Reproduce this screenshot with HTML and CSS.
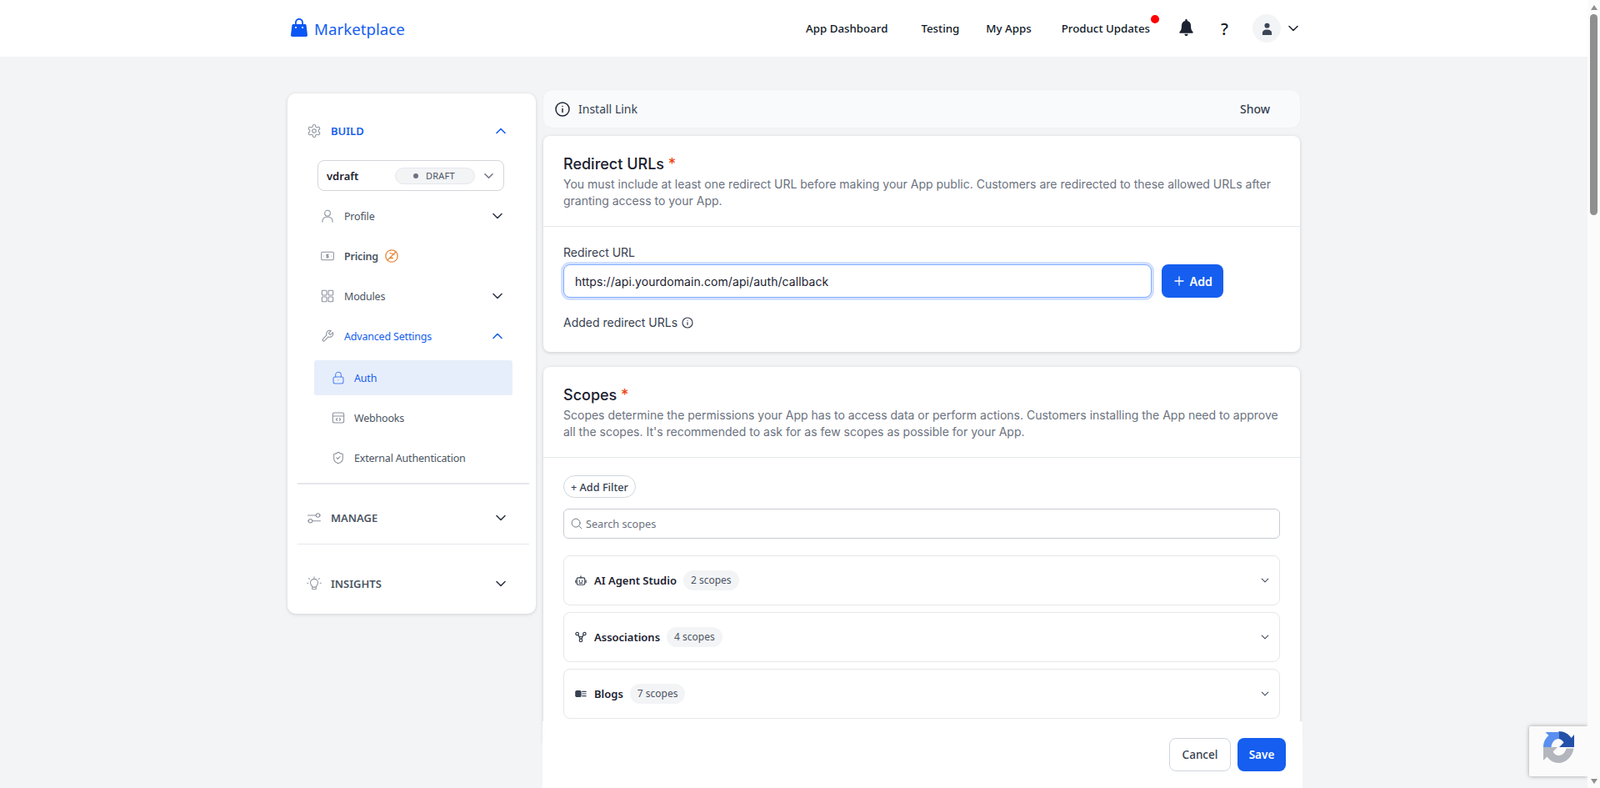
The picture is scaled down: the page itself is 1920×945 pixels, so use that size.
FILE: index.html
```html
<!DOCTYPE html>
<html lang="en">
<head>
  <meta charset="UTF-8" />
  <title>Marketplace</title>
  <link rel="stylesheet" href="styles.css">
</head>
<body>

<div class="page">
  <header class="topbar">
    <div class="topbar-inner">
      <a class="logo">
        <svg class="logo-bag" viewBox="0 0 20 22"><path fill="#0b57f5" d="M10 0C7 0 5 2.300 5 5.200V7H2.900C2.100 7 1.500 7.600 1.400 8.400L0 20C-.1 21.100.7 22 1.800 22h16.400c1.100 0 1.900-.9 1.800-2L18.600 8.400C18.500 7.600 17.900 7 17.100 7H15V5.200C15 2.300 13 0 10 0zM6.800 7V5.200C6.800 3.300 8 1.800 10 1.800s3.200 1.500 3.200 3.400V7z"/><circle cx="6" cy="11" r="1.100" fill="#fff"/><circle cx="14" cy="11" r="1.100" fill="#fff"/></svg>
        Marketplace
      </a>
      <nav class="topnav">
        <a class="topnav-link topnav-first">App Dashboard</a>
        <a class="topnav-link">Testing</a>
        <a class="topnav-link topnav-third">My Apps</a>
        <a class="topnav-link updates">Product Updates<span class="red-dot"></span></a>
        <svg class="bell" viewBox="0 0 18 22"><path fill="#1b2130" d="M9 0c-.8 0-1.400.6-1.400 1.400v.7C4.600 2.800 2.900 5.300 2.900 8.500c0 4-.8 6.300-2.300 7.800-.6.600-.7 1-.5 1.500.2.400.6.600 1.200.6h15.400c.6 0 1-.2 1.200-.6.200-.5.100-.9-.5-1.500-1.500-1.500-2.300-3.800-2.300-7.800 0-3.200-1.700-5.700-4.700-6.400v-.7C10.400.6 9.800 0 9 0zM6.600 19.400C6.800 20.900 7.800 22 9 22s2.200-1.100 2.400-2.600z"/></svg>
        <span class="help">?</span>
        <span class="avatar">
          <svg viewBox="0 0 14 16"><circle cx="7" cy="4" r="3.300" fill="#3c4658"/><path fill="#3c4658" d="M1 16v-2.500C1 10.500 3.500 9 7 9s6 1.500 6 4.500V16z"/></svg>
        </span>
        <svg class="avatar-chevron" viewBox="0 0 12 8"><path d="M1 1.500l5 5 5-5" fill="none" stroke="#1b2130" stroke-width="1.500" stroke-linecap="round" stroke-linejoin="round"/></svg>
      </nav>
    </div>
  </header>

  <div class="layout">
    <aside class="sidebar">
      <div class="side-head active first">
        <svg class="ic-16 grey" viewBox="0 0 24 24"><path d="M12.220 2h-.44a2 2 0 0 0-2 2v.18a2 2 0 0 1-1 1.730l-.43.25a2 2 0 0 1-2 0l-.15-.08a2 2 0 0 0-2.730.73l-.22.38a2 2 0 0 0 .73 2.730l.15.1a2 2 0 0 1 1 1.720v.51a2 2 0 0 1-1 1.740l-.15.09a2 2 0 0 0-.73 2.730l.22.38a2 2 0 0 0 2.730.73l.15-.08a2 2 0 0 1 2 0l.43.25a2 2 0 0 1 1 1.730V20a2 2 0 0 0 2 2h.44a2 2 0 0 0 2-2v-.18a2 2 0 0 1 1-1.730l.43-.25a2 2 0 0 1 2 0l.15.08a2 2 0 0 0 2.730-.73l.22-.39a2 2 0 0 0-.73-2.730l-.15-.08a2 2 0 0 1-1-1.740v-.5a2 2 0 0 1 1-1.740l.15-.09a2 2 0 0 0 .73-2.730l-.22-.38a2 2 0 0 0-2.730-.73l-.15.08a2 2 0 0 1-2 0l-.43-.25a2 2 0 0 1-1-1.730V4a2 2 0 0 0-2-2z"/><circle cx="12" cy="12" r="3"/></svg>
        <span>BUILD</span>
        <svg class="chev" viewBox="0 0 12 8"><path d="M1 6.500l5-5 5 5"/></svg>
      </div>

      <div class="version-select">
        <span class="version-name">vdraft</span>
        <span class="draft-pill"><i></i>DRAFT</span>
        <svg class="chev chev-light" viewBox="0 0 12 8"><path d="M1 1.500l5 5 5-5"/></svg>
      </div>

      <div class="side-row">
        <svg class="ic-14 grey" viewBox="0 0 24 24"><circle cx="12" cy="7" r="5"/><path d="M3 23v-2a7 7 0 0 1 7-7h4a7 7 0 0 1 7 7v2"/></svg>
        <span>Profile</span>
        <svg class="chev" viewBox="0 0 12 8"><path d="M1 1.500l5 5 5-5"/></svg>
      </div>
      <div class="side-row strong">
        <svg class="ic-14 grey" viewBox="0 0 24 24"><rect x="1" y="5" width="22" height="14" rx="2"/><path d="M12 8.500v7M14 10.200c-.5-.6-1.200-.8-2-.8-1 0-2 .5-2 1.400 0 2 4 .9 4 2.800 0 .9-1 1.400-2 1.400-.8 0-1.500-.3-2-.9M5 12h.01M19 12h.01"/></svg>
        <span>Pricing</span>
        <svg class="pricing-badge" viewBox="0 0 16 16"><circle cx="8" cy="8" r="7.200"/><path d="M3 13L13 3M6 4.500l5 1.500M8.500 7.500l-2 3h3"/></svg>
      </div>
      <div class="side-row">
        <svg class="ic-14 grey" viewBox="0 0 24 24"><rect x="2" y="2" width="8.500" height="8.500" rx="1.500"/><rect x="13.500" y="2" width="8.500" height="8.500" rx="1.500"/><rect x="2" y="13.500" width="8.500" height="8.500" rx="1.500"/><rect x="13.500" y="13.500" width="8.500" height="8.500" rx="1.500"/></svg>
        <span>Modules</span>
        <svg class="chev" viewBox="0 0 12 8"><path d="M1 1.500l5 5 5-5"/></svg>
      </div>
      <div class="side-row active">
        <svg class="ic-14 grey" viewBox="0 0 24 24"><path d="M14.700 6.300a1 1 0 0 0 0 1.400l1.600 1.600a1 1 0 0 0 1.400 0l3.770-3.770a6 6 0 0 1-7.940 7.940l-6.910 6.910a2.120 2.120 0 0 1-3-3l6.910-6.910a6 6 0 0 1 7.940-7.940l-3.760 3.760z"/></svg>
        <span>Advanced Settings</span>
        <svg class="chev" viewBox="0 0 12 8"><path d="M1 6.500l5-5 5 5"/></svg>
      </div>

      <div class="side-sub selected">
        <svg class="ic-14 blue" viewBox="0 0 24 24"><rect x="3" y="10.500" width="18" height="12" rx="3"/><path d="M7 10.500V7a5 5 0 0 1 10 0v3.500M12 16h.01"/></svg>
        <span>Auth</span>
      </div>
      <div class="side-sub">
        <svg class="ic-14 grey" viewBox="0 0 24 24"><rect x="2" y="3" width="20" height="18" rx="3"/><path d="M2 9h20M10 13l-2 2 2 2M14 13l2 2-2 2"/></svg>
        <span>Webhooks</span>
      </div>
      <div class="side-sub">
        <svg class="ic-14 grey" viewBox="0 0 24 24"><path d="M20 13c0 5-3.500 7.500-7.660 8.950a1 1 0 0 1-.67-.01C7.500 20.500 4 18 4 13V6a1 1 0 0 1 1-1c2 0 4.500-1.200 6.240-2.720a1.170 1.170 0 0 1 1.520 0C14.510 3.810 17 5 19 5a1 1 0 0 1 1 1z"/><path d="M9 12l2 2 4-4"/></svg>
        <span>External Authentication</span>
      </div>

      <div class="side-divider thick"></div>

      <div class="side-head manage">
        <svg class="ic-16 grey" viewBox="0 0 24 24"><path d="M2 8h13M21 8h1M2 17h1M9 17h13"/><circle cx="18" cy="8" r="3"/><circle cx="6" cy="17" r="3"/></svg>
        <span>MANAGE</span>
        <svg class="chev" viewBox="0 0 12 8"><path d="M1 1.500l5 5 5-5"/></svg>
      </div>

      <div class="side-divider"></div>

      <div class="side-head insights">
        <svg class="ic-16 grey" viewBox="0 0 24 24"><path d="M9 17c0-1.500-3-3-3-6.500a6 6 0 0 1 12 0C18 14 15 15.500 15 17v2.500a1.500 1.500 0 0 1-1.500 1.500h-3A1.500 1.500 0 0 1 9 19.500zM9.500 17.500h5M12 1v1.500M3.500 3.500l1 1M20.500 3.500l-1 1M1 11h1.500M21.500 11H23"/></svg>
        <span>INSIGHTS</span>
        <svg class="chev" viewBox="0 0 12 8"><path d="M1 1.500l5 5 5-5"/></svg>
      </div>
    </aside>

    <main class="content">
      <div class="install-bar">
        <svg class="install-icon" viewBox="0 0 18 18"><circle cx="9" cy="9" r="8"/><path d="M9 8.500v4M9 5.500h.01"/></svg>
        <span class="install-label">Install Link</span>
        <span class="install-show">Show</span>
      </div>

      <section class="card redirect-card">
        <div class="card-head">
          <h2>Redirect URLs <span class="req">*</span></h2>
          <p>You must include at least one redirect URL before making your App public. Customers are redirected to these allowed URLs after granting access to your App.</p>
        </div>
        <div class="card-body">
          <label class="field-label" for="redirectUrl">Redirect URL</label>
          <div class="redirect-row">
            <input class="redirect-input" id="redirectUrl" type="text" value="https://api.yourdomain.com/api/auth/callback" />
            <button class="btn-primary add-btn">
              <svg viewBox="0 0 12 12"><path d="M6 1v10M1 6h10"/></svg>
              Add
            </button>
          </div>
          <div class="added-label">
            Added redirect URLs
            <svg viewBox="0 0 14 14"><circle cx="7" cy="7" r="6"/><path d="M7 6.500v3M7 4.300h.01"/></svg>
          </div>
        </div>
      </section>

      <section class="card scopes-card">
        <div class="card-head">
          <h2>Scopes <span class="req">*</span></h2>
          <p>Scopes determine the permissions your App has to access data or perform actions. Customers installing the App need to approve all the scopes. It's recommended to ask for as few scopes as possible for your App.</p>
        </div>
        <div class="card-body scopes-body">
          <button class="filter-btn">+ Add Filter</button>
          <div class="scope-search">
            <svg viewBox="0 0 16 16"><circle cx="7" cy="7" r="5.700"/><path d="M11.300 11.300L14.500 14.500"/></svg>
            <span>Search scopes</span>
          </div>

          <div class="scope-row">
            <svg class="scope-icon" viewBox="0 0 16 16"><rect x="2.500" y="4.500" width="11" height="9.500" rx="2"/><path d="M8 4.500V2M1 8v3M15 8v3M6 8v1.500M10 8v1.500M6 11.500h4"/></svg>
            <span class="scope-name">AI Agent Studio</span>
            <span class="scope-count">2 scopes</span>
            <svg class="chev" viewBox="0 0 12 8"><path d="M1 1.500l5 5 5-5"/></svg>
          </div>
          <div class="scope-row">
            <svg class="scope-icon" viewBox="0 0 16 16"><circle cx="3" cy="3.500" r="2"/><circle cx="13" cy="3.500" r="2"/><circle cx="8" cy="12.500" r="2"/><path d="M4.500 5L7 10.500M11.500 5L9 10.500M5.500 7.500h5"/></svg>
            <span class="scope-name">Associations</span>
            <span class="scope-count">4 scopes</span>
            <svg class="chev" viewBox="0 0 12 8"><path d="M1 1.500l5 5 5-5"/></svg>
          </div>
          <div class="scope-row">
            <svg class="scope-icon" viewBox="0 0 16 16"><rect x="1" y="4" width="7" height="8" rx="1.500" fill="#374151"/><path d="M10 5h5M10 8h5M10 11h5"/></svg>
            <span class="scope-name">Blogs</span>
            <span class="scope-count">7 scopes</span>
            <svg class="chev" viewBox="0 0 12 8"><path d="M1 1.500l5 5 5-5"/></svg>
          </div>
        </div>
      </section>

      <div class="save-bar">
        <button class="btn-cancel">Cancel</button>
        <button class="btn-primary save-btn">Save</button>
      </div>
    </main>
  </div>

  <div class="recaptcha">
    <svg viewBox="0 0 38 38">
      <path fill="#5a8ff0" d="M0 19C0 13 2.500 8.500 6.500 5L2.500 1H18.500V9C14 9 10 13 9.500 19Z"/>
      <path fill="#2350a9" d="M18.500 0C25 0 30.500 3 33.500 8L37 4V19H19L24.500 13.500C23 11 21 9.500 18.500 9Z"/>
      <path fill="#b3b7bd" d="M0 19H17L11.500 24.500C13 27 15.500 29 18.500 29C23 29 26.500 25 27.500 20.500H36.500C35 30 27.500 38 18.500 38C12.500 38 7.500 35 4.500 30.500L0 35Z"/>
    </svg>
  </div>
</div>

<div class="scrollbar">
  <span class="arrow-up"></span>
  <span class="thumb"></span>
  <span class="arrow-down"></span>
</div>

</body>
</html>
```

FILE: styles.css
```css
:root {
  --bg: #f3f4f6;
  --text: #1b2130;
  --muted: #6b7280;
  --side-text: #4b5563;
  --blue: #155eef;
  --border: #e5e7eb;
  --ui-font: "Noto Sans", "Inter", sans-serif;
}

* {
  box-sizing: border-box;
}

html, body {
  height: 100%;
}

body {
  margin: 0;
  display: flex;
  overflow: hidden;
  background: var(--bg);
  color: var(--text);
  font-family: "Inter", "Liberation Sans", sans-serif;
  font-size: 14px;
}

h2, p {
  margin: 0;
}

svg {
  flex: none;
  display: block;
}

.page {
  position: relative;
  flex: 1;
  min-width: 0;
  display: flex;
  flex-direction: column;
  overflow: hidden;
}

/* top bar */
.topbar {
  flex: none;
  height: 68px;
  background: #fff;
}

.topbar-inner {
  width: 1215px;
  height: 100%;
  margin: 0 auto;
  padding: 0 2px 0 4px;
  display: flex;
  align-items: center;
  justify-content: space-between;
  font-family: var(--ui-font);
}

.logo {
  display: flex;
  align-items: center;
  gap: 8px;
  color: var(--blue);
  font-size: 18.7px;
}

.logo-bag {
  width: 20px;
  height: 22px;
  margin-top: -2px;
}

.topnav {
  display: flex;
  align-items: center;
}

.topnav-link {
  font-size: 13.3px;
  font-weight: 500;
  color: #111827;
  margin-right: 32px;
}

.topnav-first {
  margin-right: 40px;
}

.topnav-third {
  margin-right: 36px;
}

.updates {
  position: relative;
  margin-right: 35px;
}

.red-dot {
  position: absolute;
  top: -7px;
  right: -11px;
  width: 10px;
  height: 10px;
  border-radius: 50%;
  background: #f00;
}

.bell {
  width: 17px;
  height: 20px;
  margin-top: -2px;
}

.help {
  margin-left: 33px;
  font-size: 20px;
  font-weight: 500;
  color: #111827;
}

.avatar {
  width: 34px;
  height: 34px;
  margin-left: 29px;
  border-radius: 50%;
  background: #f3f4f6;
  display: flex;
  align-items: center;
  justify-content: center;
}

.avatar svg {
  width: 13px;
  height: 15px;
}

.avatar-chevron {
  width: 12px;
  height: 8px;
  margin-left: 9px;
}

/* page columns */
.layout {
  flex: 1;
  min-height: 0;
  width: 1215px;
  margin: 0 auto;
  padding-top: 40px;
  display: grid;
  grid-template-columns: 298px 908px;
  column-gap: 9px;
}

/* sidebar */
.sidebar {
  align-self: start;
  margin-top: 4px;
  padding-bottom: 16px;
  background: #fff;
  border-radius: 10px;
  box-shadow: 0 1px 4px rgba(0, 0, 0, 0.14);
  font-family: var(--ui-font);
}

.ic-14, .ic-16, .install-icon, .scope-icon, .chev, .pricing-badge {
  fill: none;
  stroke-linecap: round;
  stroke-linejoin: round;
}

.ic-14 {
  width: 16px;
  height: 16px;
  margin: 0 -1px;
  stroke-width: 1.6;
}

.ic-16 {
  width: 18px;
  height: 18px;
  margin: 0 -1px;
  stroke-width: 1.4;
}

.grey {
  stroke: #8b919c;
}

.blue {
  stroke: #4f83f1;
}

.chev {
  width: 12px;
  height: 8px;
  margin-left: auto;
  stroke: #2e3646;
  stroke-width: 1.6;
}

.chev-light {
  width: 11px;
  stroke: #6b7280;
  margin-left: 11px;
}

.side-head {
  height: 40px;
  padding: 0 36px 0 24px;
  display: flex;
  align-items: center;
  gap: 12px;
  font-size: 13px;
  font-weight: 600;
  color: var(--side-text);
}

.side-head.first {
  margin-top: 25px;
}

.side-head.active {
  color: var(--blue);
}

.side-head.active .chev, .side-row.active .chev {
  stroke: var(--blue);
}

.side-head.manage {
  margin-top: 20px;
}

.side-head.insights {
  margin-top: 27px;
}

.version-select {
  height: 37px;
  margin: 15px 38px 0 36px;
  padding: 0 10px;
  display: flex;
  align-items: center;
  border: 1px solid #d3d5da;
  border-radius: 8px;
}

.version-name {
  width: 82px;
  font-size: 13px;
  font-weight: 600;
  color: #1b2130;
}

.draft-pill {
  width: 96px;
  height: 20px;
  padding-left: 21px;
  display: flex;
  align-items: center;
  gap: 9px;
  background: #f3f4f6;
  border: 1px solid #e5e7eb;
  border-radius: 10px;
  font-size: 11px;
  letter-spacing: 0.2px;
  color: #4b5563;
}

.draft-pill i {
  width: 6px;
  height: 6px;
  border-radius: 50%;
  background: #6b7280;
}

.side-row {
  height: 48px;
  padding: 0 40px 0 41px;
  display: flex;
  align-items: center;
  gap: 13px;
  font-size: 12.5px;
  letter-spacing: -0.19px;
  color: var(--side-text);
}

.version-select + .side-row {
  margin-top: 6px;
}

.side-row.strong {
  font-weight: 600;
}

.side-row.active {
  color: var(--blue);
}

.pricing-badge {
  width: 16px;
  height: 16px;
  margin-left: -5px;
  stroke: #e8883a;
  stroke-width: 1.3;
}

.side-sub {
  height: 42px;
  margin: 0 28px 6px 32px;
  padding-left: 22px;
  display: flex;
  align-items: center;
  gap: 12px;
  border-radius: 3px;
  font-size: 12.5px;
  letter-spacing: -0.19px;
  color: var(--side-text);
}

.side-row.active + .side-sub {
  margin-top: 5px;
}

.side-sub.selected {
  background: #e7eefb;
  color: var(--blue);
}

.side-divider {
  height: 1px;
  margin: 11px 8px 0 12px;
  background: var(--border);
}

.side-divider.thick {
  height: 2px;
  margin-top: 9px;
}

/* main column */
.content {
  position: relative;
  min-width: 0;
}

.install-bar {
  height: 45px;
  padding: 0 36px 0 14px;
  display: flex;
  align-items: center;
  background: #f9fafb;
  border-radius: 10px;
  box-shadow: 0 0 1px rgba(0, 0, 0, 0.1);
  font-family: var(--ui-font);
}

.install-icon {
  width: 18px;
  height: 18px;
  stroke: #1f2937;
  stroke-width: 1.5;
}

.install-label {
  margin-left: 10px;
  font-size: 14px;
  color: #374151;
}

.install-show {
  margin-left: auto;
  font-size: 14px;
  font-weight: 500;
  color: #374151;
}

.card {
  margin-top: 18px;
  background: #fff;
  border-radius: 8px;
  box-shadow: 0 1px 4px rgba(0, 0, 0, 0.16);
}

.redirect-card {
  margin-top: 10px;
}

.card-head {
  padding: 20px 24px 20px;
  border-bottom: 1px solid var(--border);
}

.card-head h2 {
  font-size: 18px;
  line-height: 28px;
  font-weight: 500;
  color: #1b2130;
}

.req {
  color: #f0440f;
}

.card-head p {
  font-size: 14px;
  line-height: 20px;
  color: var(--muted);
}

.card-body {
  padding: 21px 24px 25px;
}

.field-label {
  display: block;
  line-height: 20px;
  font-size: 14px;
  color: #374151;
}

.redirect-row {
  margin-top: 4px;
  display: flex;
  gap: 12px;
}

.redirect-input {
  width: 706px;
  height: 40px;
  padding: 0 13px;
  border: 1px solid #84adff;
  border-radius: 8px;
  outline: none;
  box-shadow: 0 0 0 3px #d1e0ff;
  font: inherit;
  font-size: 14px;
  letter-spacing: 0.08px;
  color: #1b2130;
}

.btn-primary {
  border: none;
  border-radius: 8px;
  background: var(--blue);
  color: #fff;
  font: inherit;
  font-size: 14px;
  font-weight: 600;
}

.add-btn {
  width: 74px;
  height: 40px;
  padding: 0 0 0 2px;
  display: flex;
  align-items: center;
  justify-content: center;
  gap: 6px;
}

.add-btn svg {
  width: 12px;
  height: 12px;
  fill: none;
  stroke: #fff;
  stroke-width: 1.3;
  stroke-linecap: round;
}

.added-label {
  margin-top: 20px;
  display: flex;
  align-items: center;
  gap: 5px;
  line-height: 20px;
  color: #374151;
}

.added-label svg {
  width: 14px;
  height: 14px;
  fill: none;
  stroke: #374151;
  stroke-width: 1.2;
  stroke-linecap: round;
}

.filter-btn {
  display: block;
  height: 27px;
  padding: 0 8px;
  background: #fff;
  border: 1px solid #d0d5dd;
  border-radius: 14px;
  font-family: var(--ui-font);
  font-size: 12.7px;
  font-weight: 500;
  color: #374151;
}

.scope-search {
  height: 36px;
  margin: 13px 0 20px;
  padding: 0 8px;
  display: flex;
  align-items: center;
  gap: 4px;
  border: 1px solid #c9ccd3;
  border-radius: 6px;
  font-family: var(--ui-font);
  font-size: 12.7px;
  color: #6b7280;
}

.scope-search svg {
  width: 14px;
  height: 14px;
  fill: none;
  stroke: #6b7280;
  stroke-width: 1.1;
  stroke-linecap: round;
}

.scope-row {
  height: 60px;
  margin-bottom: 8px;
  padding: 0 11px 0 13px;
  display: flex;
  align-items: center;
  border: 1px solid var(--border);
  border-radius: 8px;
  font-family: var(--ui-font);
}

.scope-icon {
  width: 14px;
  height: 14px;
  margin-right: 9px;
  stroke: #374151;
  stroke-width: 1.4;
}

.scope-name {
  font-size: 13px;
  font-weight: 600;
  color: #1b2130;
}

.scope-count {
  margin-left: 8px;
  padding: 0 9px;
  height: 24px;
  line-height: 24px;
  border-radius: 12px;
  background: #f3f4f6;
  font-size: 12px;
  color: #4b5563;
}

.scope-row .chev {
  width: 10px;
  height: 6px;
  margin-right: 1px;
  stroke: #4b5563;
}

.save-bar {
  position: absolute;
  left: -1px;
  right: -3px;
  bottom: 0;
  height: 80px;
  padding: 20px 20px 0 0;
  display: flex;
  justify-content: flex-end;
  gap: 8px;
  background: #fff;
  font-family: var(--ui-font);
}

.btn-cancel {
  width: 74px;
  height: 40px;
  background: #fff;
  border: 1px solid #d0d5dd;
  border-radius: 8px;
  font: inherit;
  font-size: 13.5px;
  font-weight: 500;
  color: #374151;
}

.save-btn {
  width: 58px;
  height: 40px;
  font-size: 13.5px;
}

/* recaptcha badge */
.recaptcha {
  position: absolute;
  right: 0;
  bottom: 14px;
  width: 70px;
  height: 60px;
  padding: 6px 0 0 17px;
  background: #fbfbfb;
  box-shadow: 0 0 5px rgba(0, 0, 0, 0.35);
  border-radius: 2px 0 0 2px;
}

.recaptcha svg {
  width: 38px;
  height: 38px;
}

/* window scrollbar */
.scrollbar {
  flex: none;
  width: 15px;
  height: 100%;
  padding-top: 6px;
  display: flex;
  flex-direction: column;
  align-items: center;
  background: #fbfbfb;
}

.arrow-up, .arrow-down {
  width: 0;
  height: 0;
  border-left: 4.5px solid transparent;
  border-right: 4.5px solid transparent;
}

.arrow-up {
  border-bottom: 6px solid #8f8f8f;
}

.arrow-down {
  margin-top: auto;
  margin-bottom: 5px;
  border-top: 6px solid #8f8f8f;
}

.thumb {
  width: 9px;
  height: 241px;
  margin-top: 5px;
  border-radius: 5px;
  background: #8f8f8f;
}
```
